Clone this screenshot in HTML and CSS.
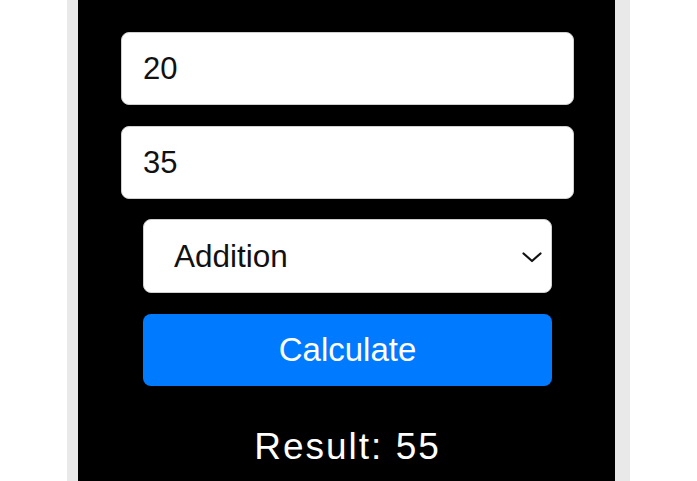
FILE: index.html
```html
<!DOCTYPE html>
<html lang="en">
<head>
<meta charset="utf-8">
<title>Calculator</title>
<link rel="stylesheet" href="styles.css">
</head>
<body>
<div class="page">
  <div class="frame">
    <div class="calculator">
      <input class="field" type="text" value="20">
      <input class="field" type="text" value="35">
      <div class="select-wrap">
        <select class="operation">
          <option>Addition</option>
          <option>Subtraction</option>
          <option>Multiplication</option>
          <option>Division</option>
        </select>
        <svg class="chevron" width="20" height="11" viewBox="0 0 20 11" aria-hidden="true">
          <polyline points="1.5,1.5 10,9 18.5,1.5" fill="none" stroke="#111" stroke-width="2.2" stroke-linecap="round" stroke-linejoin="round"/>
        </svg>
      </div>
      <button class="calc-btn" type="button">Calculate</button>
      <p class="result">Result: 55</p>
    </div>
  </div>
</div>
</body>
</html>
```

FILE: styles.css
```css
html, body {
  margin: 0;
  padding: 0;
  background: #ffffff;
  height: 100%;
  overflow: hidden;
}

.page {
  display: flex;
  padding-left: 67px;
  height: 100%;
}

.frame {
  width: 563px;
  box-sizing: border-box;
  padding: 0 15px 0 11px;
  background: #e9e9e9;
}

.calculator {
  background: #000000;
  height: 100%;
  box-sizing: border-box;
  padding-top: 32px;
  display: flex;
  flex-direction: column;
  align-items: center;
  font-family: "Liberation Sans", Arial, sans-serif;
}

.field {
  width: 453px;
  height: 73px;
  box-sizing: border-box;
  margin: 0 0 21px 2px;
  padding: 0 0 0 21px;
  border: 1px solid #cfcfcf;
  border-radius: 8px;
  background: #ffffff;
  color: #111111;
  font-family: "Liberation Sans", Arial, sans-serif;
  font-size: 31px;
  outline: none;
}

.field:last-of-type {
  margin-bottom: 20px;
}

.select-wrap {
  position: relative;
  width: 409px;
  height: 74px;
  margin: 0 0 21px 2px;
}

.operation {
  appearance: none;
  -webkit-appearance: none;
  width: 100%;
  height: 100%;
  box-sizing: border-box;
  padding: 0 0 0 30px;
  border: 1px solid #cfcfcf;
  border-radius: 8px;
  background: #ffffff;
  color: #111111;
  font-family: "Liberation Sans", Arial, sans-serif;
  font-size: 31.5px;
  outline: none;
}

.chevron {
  position: absolute;
  right: 10px;
  top: 33px;
  pointer-events: none;
}

.calc-btn {
  width: 409px;
  height: 72px;
  margin: 0 0 0 2px;
  border: none;
  border-radius: 8px;
  background: #007bff;
  color: #ffffff;
  font-family: "Liberation Sans", Arial, sans-serif;
  font-size: 33px;
  cursor: pointer;
}

.result {
  margin: 40px 0 0 2px;
  color: #ffffff;
  font-size: 37px;
  line-height: 42px;
  letter-spacing: 2px;
}
```
